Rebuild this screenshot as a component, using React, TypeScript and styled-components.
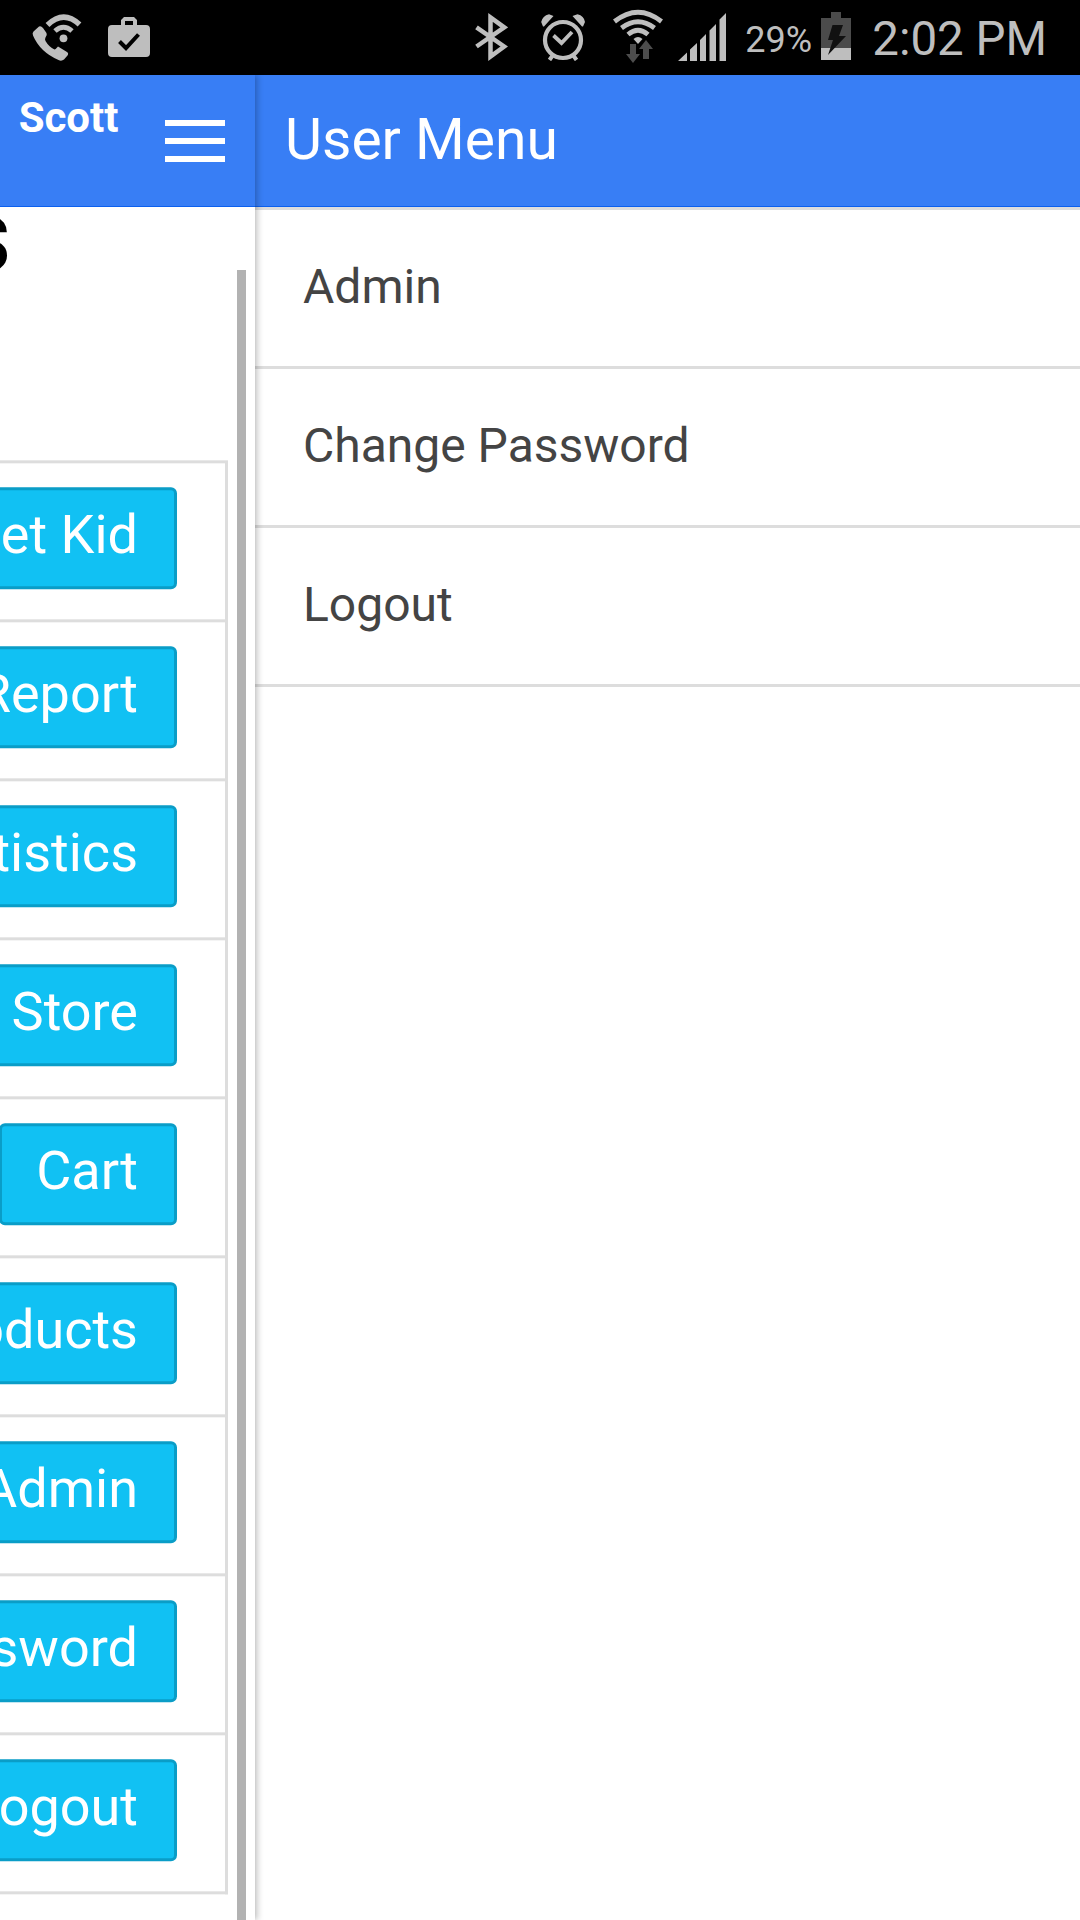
import React from 'react';
import styled, { createGlobalStyle } from 'styled-components';

const GlobalStyle = createGlobalStyle`
  * { box-sizing: border-box; }
  body {
    margin: 0;
    background: #fff;
    font-family: Roboto, "Liberation Sans", sans-serif;
    overflow: hidden;
  }
`;

const Screen = styled.div`
  display: flex;
  flex-direction: column;
  width: 1080px;
  height: 1920px;
  background: #fff;
  overflow: hidden;
`;

const StatusBar = styled.header`
  display: flex;
  flex: none;
  justify-content: space-between;
  height: 75px;
  padding: 0 33px 0 32px;
  background: #000;
  color: #bebebe;
`;

const StatusGroup = styled.div`
  display: flex;
  align-items: flex-start;
`;

const Glyph = styled.svg<{ $top: number; $left?: number }>`
  display: block;
  flex: none;
  margin-top: ${(p) => p.$top}px;
  margin-left: ${(p) => p.$left ?? 0}px;
  fill: #bebebe;
`;

const StatusText = styled.span<{ $size: number; $left: number; $nudge: number }>`
  margin-left: ${(p) => p.$left}px;
  padding-top: ${(p) => p.$nudge}px;
  font-size: ${(p) => p.$size}px;
  font-weight: 400;
  line-height: 75px;
  white-space: nowrap;
`;

const Body = styled.div`
  display: flex;
  flex: 1;
  min-height: 0;
`;

const Page = styled.section`
  z-index: 1;
  display: flex;
  flex: none;
  flex-direction: column;
  width: 255px;
  background: #fff;
  box-shadow: -3px 0 6px rgba(0, 0, 0, 0.2), 3px 0 6px rgba(0, 0, 0, 0.2);
`;

const Bar = styled.div`
  display: flex;
  flex: none;
  height: 132px;
  background: #387ef5;
  border-bottom: 1px solid #0c60ee;
  color: #fff;
`;

const PageBar = styled(Bar)`
  justify-content: flex-end;
  padding-right: 30px;
`;

const UserName = styled.span`
  margin-right: 46.5px;
  padding-top: 18px;
  font-size: 42px;
  font-weight: 700;
  line-height: 49px;
`;

const MenuButton = styled.button`
  display: flex;
  flex-direction: column;
  gap: 12px;
  width: 60px;
  margin: 45px 0 0;
  padding: 0;
  border: 0;
  background: none;
`;

const MenuLine = styled.span`
  height: 6px;
  background: #fff;
`;

const Scroller = styled.div`
  display: flex;
  flex: 1;
  min-height: 0;
  padding-right: 9px;
  overflow: hidden;
`;

const PageContent = styled.div`
  display: flex;
  flex: 1;
  flex-direction: column;
  min-width: 0;
  margin-right: 9px;
  transform: translate3d(0, 0.33px, 0);
`;

const Heading = styled.h1`
  display: flex;
  flex: none;
  justify-content: flex-end;
  height: 253px;
  margin: 0;
  padding: 0 217px 0 0;
  font-size: 108px;
  font-weight: 700;
  line-height: 56px;
  color: #000;
`;

const ActionList = styled.div`
  flex: none;
  border-right: 3px solid #ddd;
  border-bottom: 3px solid #ddd;
`;

const ActionRow = styled.div`
  display: flex;
  justify-content: flex-end;
  height: 159px;
  padding: 24px 48px 0 0;
  border-top: 3px solid #ddd;
`;

const ActionButton = styled.button`
  flex: none;
  height: 102px;
  padding: 0 36px 6px 34px;
  border: 3px solid #0a9dc7;
  border-radius: 6px;
  background: #11c1f3;
  color: #fff;
  font: 400 54px/90px Roboto, "Liberation Sans", sans-serif;
  text-align: right;
  white-space: nowrap;
`;

const ScrollThumb = styled.div`
  flex: none;
  width: 9px;
  margin-top: 63px;
  background: #b2b2b2;
`;

const SideMenu = styled.aside`
  display: flex;
  flex: 1;
  flex-direction: column;
  background: #fff;
`;

const MenuTitle = styled.h2`
  margin: 0;
  padding-left: 30px;
  font-size: 57px;
  font-weight: 400;
  line-height: 129px;
`;

const MenuList = styled.ul`
  margin: 0;
  padding: 0;
  list-style: none;
  border-bottom: 3px solid #ddd;
`;

const MenuItem = styled.li`
  height: 159px;
  padding-left: 48px;
  border-top: 3px solid #ddd;
  color: #444;
  font-size: 48px;
  line-height: 154px;
`;

const actions = ['Get Kid', 'Report', 'Statistics', 'Store', 'Cart', 'Products', 'Admin', 'Change Password', 'Logout'];
const menu = ['Admin', 'Change Password', 'Logout'];

const CallIcon = () => (
  <Glyph $top={14} width="50" height="48" viewBox="0 0 50 48">
    <path d="M7 12.5 Q9 11.5 11 14 L14.5 19 Q15.5 21 13.5 23.5 Q12.5 25 13.5 27 Q17 33 22.5 35.5 Q24 35 26 32.5 L35 38 Q37 39.5 35.5 41.5 L32 45.5 Q29.5 47.5 26.5 46 Q8 38 1 21.5 Q0 19 1.5 17.5 Z" />
    <circle cx="31.5" cy="24.3" r="3.9" />
    <path d="M23 17 Q31.5 9.5 40 17" fill="none" stroke="#bebebe" strokeWidth="5" />
    <path d="M15.5 11 Q31.5 -4.5 47.5 10.5" fill="none" stroke="#bebebe" strokeWidth="5.5" />
  </Glyph>
);

const BriefcaseIcon = () => (
  <Glyph $top={16} $left={26} width="42" height="42" viewBox="0 0 42 42">
    <path fillRule="evenodd" d="M4 9H13V4L16 1H26L29 4V9H38Q42 9 42 13V37Q42 41 38 41H4Q0 41 0 37V13Q0 9 4 9ZM17 5V9H25V5Z" />
    <path d="M11.5 25.5 18 32 30.5 18.5" fill="none" stroke="#000" strokeWidth="4" />
  </Glyph>
);

const BluetoothIcon = () => (
  <Glyph $top={13} width="34" height="48" viewBox="0 0 34 48">
    <path d="M2.5 14.3 30.2 33.5 16.5 43.5V4.5L30.2 14.3 2.5 33.5" fill="none" stroke="#bebebe" strokeWidth="4.5" />
  </Glyph>
);

const AlarmIcon = () => (
  <Glyph $top={13} $left={33} width="46" height="48" viewBox="0 0 46 48">
    <circle cx="22" cy="27" r="18" fill="none" stroke="#bebebe" strokeWidth="4.2" />
    <path d="M12.5 22.5 20.5 30 31 19" fill="none" stroke="#bebebe" strokeWidth="3.8" />
    <path d="M2 13.5 0.2 9Q1.5 3 8 1.3L12.5 3 3 13.5ZM42 13.5 44 9Q43 3 36.5 1.3L31.5 3 41 13.5Z" />
    <path d="M12 42 8.5 47M32 42 35.5 47" stroke="#bebebe" strokeWidth="4" />
  </Glyph>
);

const WifiIcon = () => (
  <Glyph $top={9} $left={26} width="50" height="56" viewBox="0 0 50 56">
    <g fill="none" stroke="#bebebe" strokeWidth="4.8">
      <path d="M1.5 12.5Q25 -6 48.5 12.5" />
      <path d="M8.5 19Q25 6.5 41.5 19" />
      <path d="M15 25.5Q25 17 35 25.5" />
    </g>
    <path d="M20.5 30Q25 26 29.5 30L25 35Z" />
    <path d="M17 35H23V45H27L20 54 13 45H17ZM33 31 40 40H36V50H30V40H26Z" fill="#4d4d4d" />
  </Glyph>
);

const SignalIcon = () => (
  <Glyph $top={13} $left={15} width="48" height="48" viewBox="0 0 48 48">
    <path d="M0 48 9 39.5V48ZM12 48V36.5L19 30V48ZM22 48V27L28 21V48ZM31.5 48V17.5L38 11V48ZM41.5 48V6.5L48 0V48Z" />
  </Glyph>
);

const BatteryIcon = () => (
  <Glyph $top={12} $left={9} width="30" height="48" viewBox="0 0 30 48">
    <path d="M10 0H20V6H30V36H0V6H10Z" fill="#4b4b4b" />
    <path d="M0 36H30V48H0Z" />
    <path d="M11.5 13H22L18 24H25L7 43 12 28H7Z" fill="#111" />
  </Glyph>
);

export default function App() {
  return (
    <Screen>
      <GlobalStyle />
      <StatusBar>
        <StatusGroup>
          <CallIcon />
          <BriefcaseIcon />
        </StatusGroup>
        <StatusGroup>
          <BluetoothIcon />
          <AlarmIcon />
          <WifiIcon />
          <SignalIcon />
          <StatusText $size={36} $left={19} $nudge={3}>29%</StatusText>
          <BatteryIcon />
          <StatusText $size={47.5} $left={21} $nudge={2}>2:02 PM</StatusText>
        </StatusGroup>
      </StatusBar>
      <Body>
        <Page>
          <PageBar>
            <UserName>Scott</UserName>
            <MenuButton aria-label="Menu">
              <MenuLine />
              <MenuLine />
              <MenuLine />
            </MenuButton>
          </PageBar>
          <Scroller>
            <PageContent>
              <Heading>s</Heading>
              <ActionList>
                {actions.map((label) => (
                  <ActionRow key={label}>
                    <ActionButton>{label}</ActionButton>
                  </ActionRow>
                ))}
              </ActionList>
            </PageContent>
            <ScrollThumb />
          </Scroller>
        </Page>
        <SideMenu>
          <Bar>
            <MenuTitle>User Menu</MenuTitle>
          </Bar>
          <MenuList>
            {menu.map((label) => (
              <MenuItem key={label}>{label}</MenuItem>
            ))}
          </MenuList>
        </SideMenu>
      </Body>
    </Screen>
  );
}
